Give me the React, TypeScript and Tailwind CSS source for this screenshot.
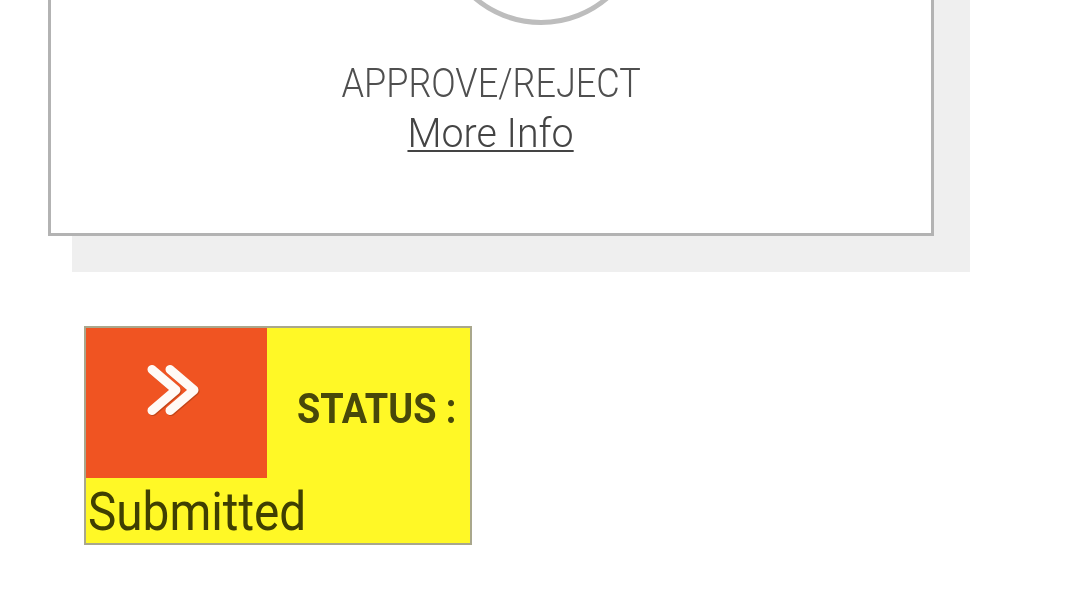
import React from 'react';

function ApprovalCard() {
  return (
    <div className="ml-[72px] w-[898px] bg-[#efefef] pr-[36px] pb-[36px]">
      <div className="-ml-[24px] bg-white border-[3px] border-t-0 border-[#b3b3b3] pb-[75px]">
        {/* status ring, cut off by the top of the page */}
        <div className="flex justify-center pl-[100px]">
          <svg width="208" height="208" viewBox="0 0 208 208" className="-mt-[183px] block">
            <circle cx="104" cy="104" r="101.5" fill="none" stroke="#bdbdbd" strokeWidth="5" />
          </svg>
        </div>
        <div className="mt-[33px] flex flex-col items-center text-[41px] leading-[50px] font-light text-[#4f4f4f]">
          <span className="inline-block scale-x-[0.88] origin-center">APPROVE/REJECT</span>
          <a href="#" className="inline-block scale-x-[0.96] origin-center underline decoration-2 underline-offset-[3px] text-[#444]">
            More Info
          </a>
        </div>
      </div>
    </div>
  );
}

function StatusBox() {
  return (
    <div className="ml-[84px] mt-[54px] w-[388px] h-[219px] border-2 border-[#a9a78c] bg-[#fff826]">
      <div className="flex">
        <div className="w-[181px] h-[150px] shrink-0 bg-[#f05422] pl-[58px] pt-[34px]">
          <svg width="60" height="56" viewBox="0 0 60 56" className="drop-shadow-[1px_1px_0_rgba(140,50,10,0.45)]">
            <path d="M8 7.5 L32 28 L8 48.5" fill="none" stroke="#fffaf6" strokeWidth="9" strokeLinecap="round" strokeLinejoin="round" />
            <path d="M26 7.5 L50 28 L26 48.5" fill="none" stroke="#fffaf6" strokeWidth="9" strokeLinecap="round" strokeLinejoin="round" />
          </svg>
        </div>
        <div className="pl-[30px] pt-[60px] text-[42px] leading-[42px] font-bold text-[#48480a]">
          <span className="inline-block scale-x-[0.9] origin-left whitespace-nowrap">STATUS :</span>
        </div>
      </div>
      <div className="text-[53px] leading-[63px] text-[#3f3f02] pt-[3px] pl-[2px]">
        <span className="inline-block scale-x-[0.9] origin-left">Submitted</span>
      </div>
    </div>
  );
}

export default function App() {
  return (
    <div className="w-[1080px] h-[607px] overflow-hidden bg-white font-['Roboto',sans-serif]">
      <ApprovalCard />
      <StatusBox />
    </div>
  );
}
